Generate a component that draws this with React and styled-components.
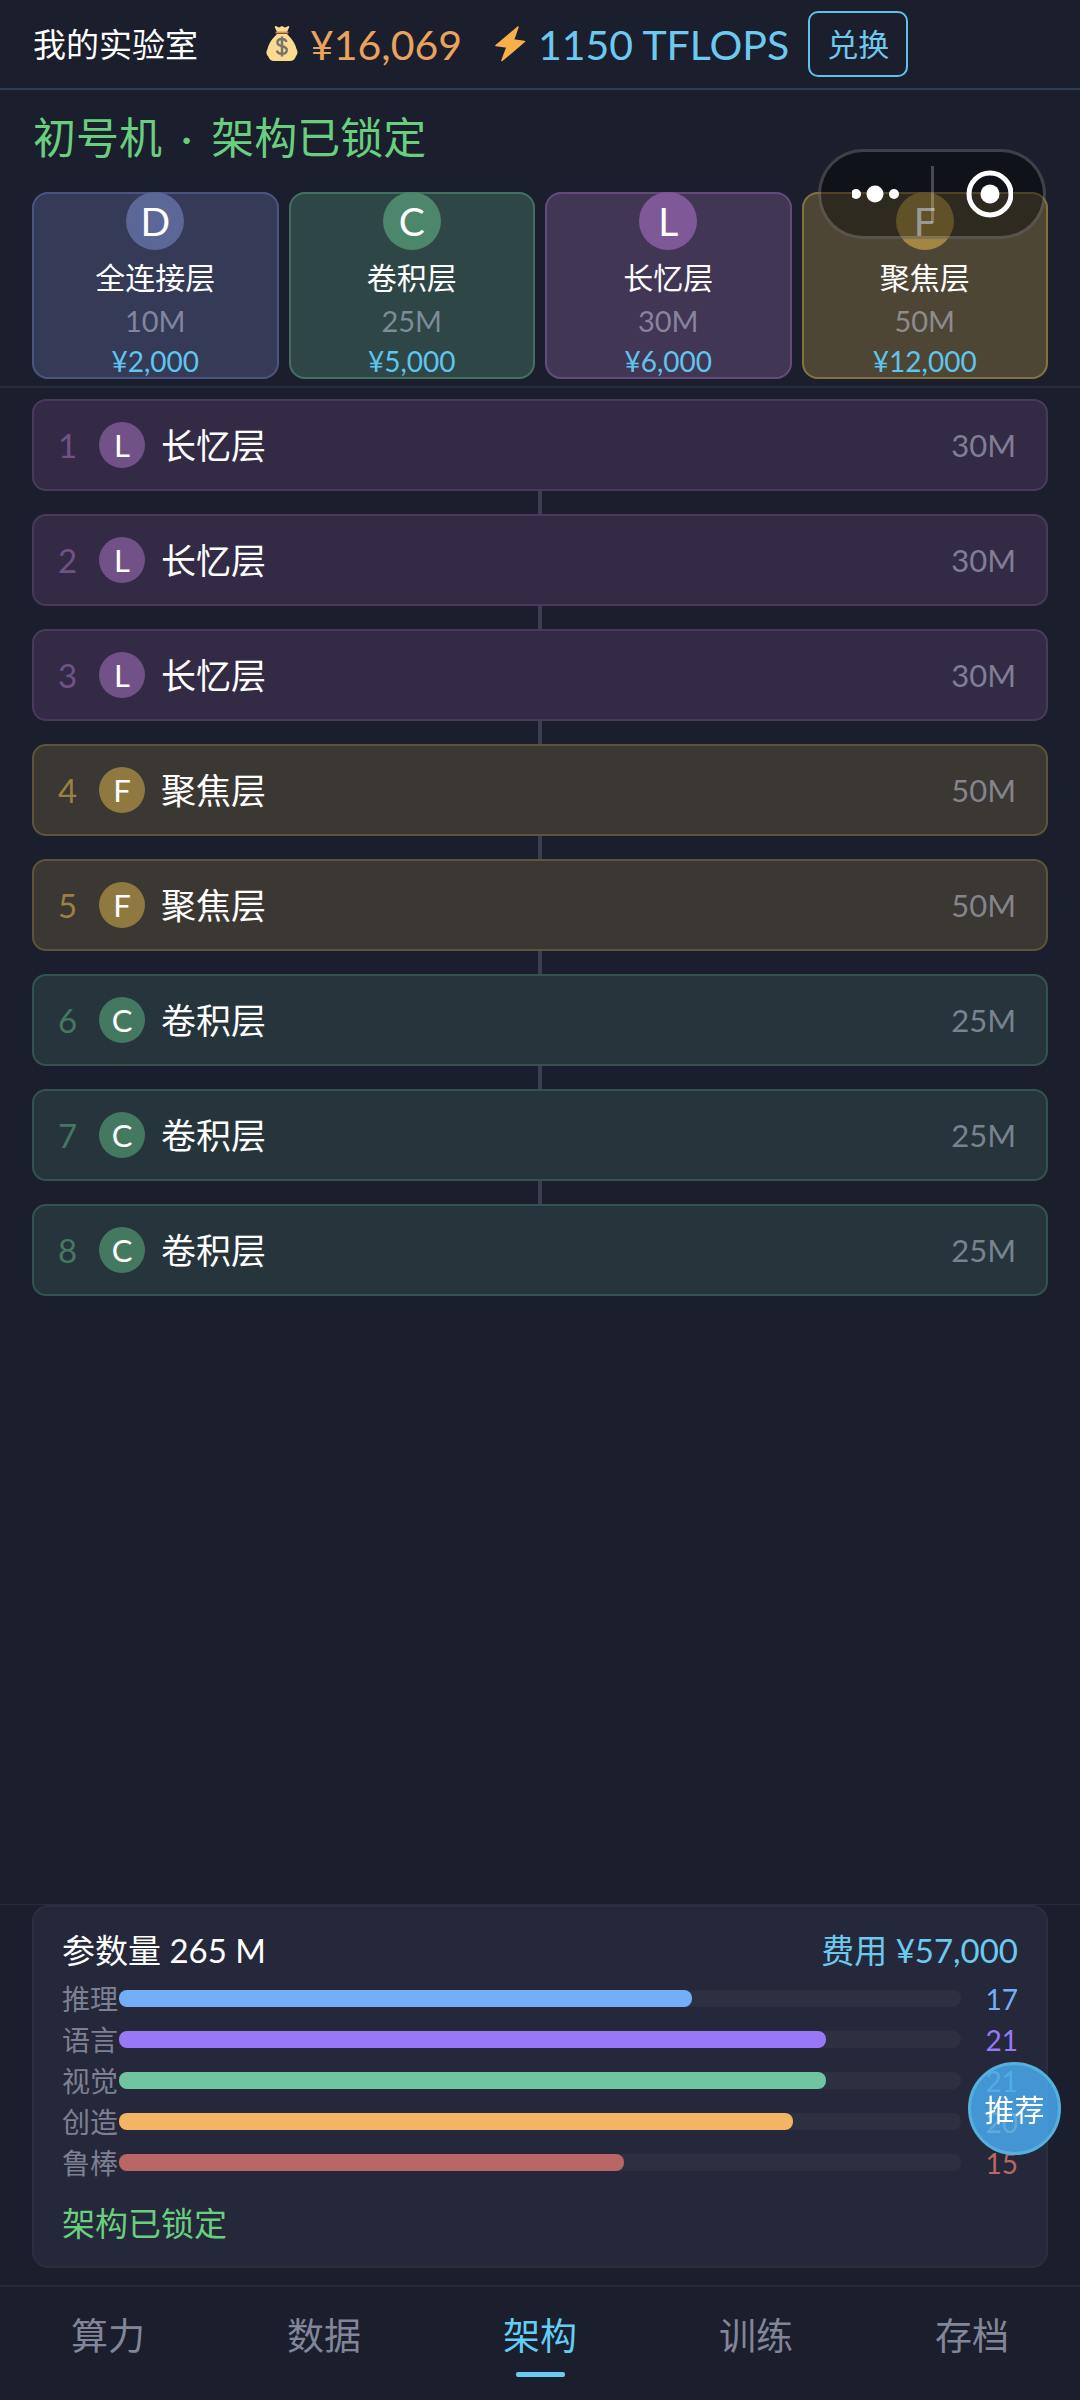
import React, { useState } from "react";
import styled, { createGlobalStyle } from "styled-components";

const GlobalStyle = createGlobalStyle`
  * {
    box-sizing: border-box;
  }
  body {
    margin: 0;
    background: #1b1e2c;
  }
  button {
    margin: 0;
    padding: 0;
    border: 0;
    background: none;
    color: inherit;
    font: inherit;
    cursor: pointer;
  }
`;

const Page = styled.div`
  min-height: 100vh;
  display: flex;
  flex-direction: column;
  background: #1b1e2c;
  color: #ffffff;
  font-family: Lato, "Noto Sans CJK SC", sans-serif;
  font-size: 33px;
  font-weight: 400;
  line-height: 1;
`;

const Header = styled.header`
  height: 90px;
  padding: 0 33px;
  display: flex;
  align-items: center;
  border-bottom: 2px solid #294052;
`;

const LabName = styled.h1`
  margin: 0 68px 0 0;
  font-size: 33px;
  font-weight: inherit;
`;

const Stat = styled.div`
  margin-right: ${(props) => props.$space}px;
  display: flex;
  align-items: center;
  gap: 12px;
  font-size: 41px;
  color: ${(props) => props.$color};
`;

const ExchangeButton = styled.button`
  && {
    height: 66px;
    padding: 0 17px;
    border: 2px solid #5dc3ea;
    border-radius: 10px;
    color: #6cc9ef;
    font-size: 31px;
  }
`;

const Title = styled.h2`
  margin: 0;
  padding: 24px 33px 0;
  height: 102px;
  font-size: 43px;
  line-height: 48px;
  font-weight: inherit;
  color: #69cf7f;
`;

const TitleDot = styled.span`
  margin: 0 8px;
`;

const Palette = styled.div`
  padding: 0 32px 7px;
  display: grid;
  grid-template-columns: repeat(4, 1fr);
  gap: 10px;
  border-bottom: 2px solid #272b3b;
`;

const LayerCard = styled.button`
  && {
    height: 187px;
    display: flex;
    flex-direction: column;
    align-items: center;
    border-radius: 16px;
    background: ${(props) => props.$tone.card};
    box-shadow: inset 0 0 0 2px ${(props) => props.$tone.cardEdge};
  }
`;

const Badge = styled.span`
  flex: none;
  width: ${(props) => props.$size}px;
  height: ${(props) => props.$size}px;
  display: flex;
  align-items: center;
  justify-content: center;
  border-radius: 50%;
  background: ${(props) => props.$color};
  color: #ffffff;
  font-size: ${(props) => (props.$size > 50 ? 39 : 31)}px;
`;

const CardName = styled.span`
  margin-top: 7px;
  font-size: 30px;
  line-height: 40px;
`;

const CardSize = styled.span`
  margin-top: 4px;
  font-size: 29px;
  line-height: 40px;
  color: rgba(205, 210, 230, 0.5);
`;

const CardPrice = styled.span`
  font-size: 28px;
  line-height: 40px;
  color: #5fc5ec;
`;

const Stack = styled.ol`
  flex: 1;
  margin: 0;
  padding: 11px 32px 0;
  list-style: none;
`;

const StackItem = styled.li`
  display: flex;
  flex-direction: column;
  align-items: center;

  &:not(:last-child)::after {
    content: "";
    width: 4px;
    height: 23px;
    background: #3b3e50;
  }
`;

const LayerRow = styled.div`
  width: 100%;
  height: 92px;
  padding: 0 30px 0 24px;
  display: flex;
  align-items: center;
  gap: 16px;
  border: 2px solid ${(props) => props.$tone.rowEdge};
  border-radius: 14px;
  background: ${(props) => props.$tone.row};
`;

const RowIndex = styled.span`
  width: 25px;
  font-size: 33px;
  color: ${(props) => props.$color};
`;

const RowName = styled.span`
  flex: 1;
  font-size: 35px;
`;

const RowSize = styled.span`
  font-size: 31px;
  color: rgba(205, 210, 230, 0.5);
`;

const Footer = styled.section`
  padding: 0 32px 17px;
  border-top: 1px solid #292c3c;
`;

const Summary = styled.div`
  height: 363px;
  padding: 19px 28px 0;
  border: 2px solid #2b2e40;
  border-radius: 16px;
  background: #25283a;
`;

const SummaryHead = styled.div`
  margin-bottom: 4px;
  display: flex;
  justify-content: space-between;
  line-height: 48px;
`;

const Cost = styled.span`
  color: #6cc9ef;
`;

const AbilityRow = styled.div`
  height: 41px;
  display: grid;
  grid-template-columns: 57px 1fr 57px;
  align-items: center;
`;

const AbilityName = styled.span`
  font-size: 28px;
  color: #7d8092;
`;

const Track = styled.div`
  height: 17px;
  border-radius: 8px;
  background: #2d3041;
`;

const Fill = styled.div`
  height: 100%;
  border-radius: 8px;
  background: ${(props) => props.$color};
`;

const AbilityValue = styled.span`
  font-size: 28px;
  text-align: right;
  color: ${(props) => props.$color};
`;

const Status = styled.p`
  margin: 16px 0 0;
  line-height: 48px;
  color: #69cf7f;
`;

const TabBar = styled.nav`
  height: 115px;
  display: grid;
  grid-template-columns: repeat(5, 1fr);
  border-top: 2px solid #272a3a;
`;

const Tab = styled.button`
  && {
    display: flex;
    flex-direction: column;
    align-items: center;
    padding-top: 24px;
    font-size: 37px;
    line-height: 50px;
    color: ${(props) => (props.$active ? "#62cdf5" : "#83869a")};
  }

  &::after {
    content: "";
    width: 49px;
    height: 5px;
    margin-top: 11px;
    border-radius: 2px;
    background: ${(props) => (props.$active ? "#6cc9ef" : "transparent")};
  }
`;

const Capsule = styled.div`
  position: fixed;
  top: 149px;
  right: 34px;
  width: 228px;
  height: 90px;
  display: flex;
  align-items: center;
  border: 3px solid rgba(255, 255, 255, 0.2);
  border-radius: 45px;
  background: rgba(0, 0, 0, 0.4);
`;

const CapsuleButton = styled.button`
  && {
    flex: 1;
    height: 100%;
    display: flex;
    align-items: center;
    justify-content: center;
  }
`;

const CapsuleDivider = styled.span`
  width: 3px;
  height: 57px;
  background: rgba(255, 255, 255, 0.24);
`;

const RecommendButton = styled.button`
  && {
    position: fixed;
    right: 19px;
    bottom: 245px;
    width: 93px;
    height: 93px;
    border: 3px solid #55b0dc;
    border-radius: 50%;
    background: rgba(73, 168, 239, 0.85);
    font-size: 30px;
  }
`;

const tones = {
  D: {
    solid: "#5a6797",
    card: "#353b57",
    cardEdge: "#4a5480",
  },
  C: {
    solid: "#4d876b",
    card: "#2e4646",
    cardEdge: "#436f60",
    row: "#26353b",
    rowEdge: "#33534f",
    badge: "#457860",
    index: "#457860",
  },
  L: {
    solid: "#7f5997",
    card: "#423655",
    cardEdge: "#654a7c",
    row: "#332b45",
    rowEdge: "#493a5b",
    badge: "#725188",
    index: "#725188",
  },
  F: {
    solid: "#a18743",
    card: "#4e4635",
    cardEdge: "#83713f",
    row: "#3b3733",
    rowEdge: "#5e5439",
    badge: "#8f7941",
    index: "#9a8142",
  },
};

const layerTypes = [
  { code: "D", name: "全连接层", size: "10M", price: "¥2,000" },
  { code: "C", name: "卷积层", size: "25M", price: "¥5,000" },
  { code: "L", name: "长忆层", size: "30M", price: "¥6,000" },
  { code: "F", name: "聚焦层", size: "50M", price: "¥12,000" },
];

const layers = ["L", "L", "L", "F", "F", "C", "C", "C"].map((code) =>
  layerTypes.find((type) => type.code === code)
);

const MAX_ABILITY = 25;

const abilities = [
  { name: "推理", value: 17, color: "#75aef8" },
  { name: "语言", value: 21, color: "#9878f6" },
  { name: "视觉", value: 21, color: "#70c5a0" },
  { name: "创造", value: 20, color: "#f2b563" },
  { name: "鲁棒", value: 15, color: "#b96764" },
];

const tabs = ["算力", "数据", "架构", "训练", "存档"];

const MoneyBag = () => (
  <svg width="32" height="38" viewBox="0 0 32 38" aria-hidden="true">
    <path
      d="M10 1l3 1.500 3-1.500 3 1.500 3.500-1.500c.8 0 .9.800.6 1.500L21 7H11L8.900 2.500C8.600 1.600 9 1 10 1z"
      fill="#fbdb92"
    />
    <path
      d="M11 9h10c3 3 8 8 9.500 15 1.800 3 .9 5.500-.5 7-.8 3-3 5-6 5H8c-3 0-5-2-6-5-1.500-1.500-2.300-4-.5-7C3 17 8 12 11 9z"
      fill="#fbdb92"
    />
    <path d="M10.500 7.500h11" stroke="#d58d50" strokeWidth="2" strokeLinecap="round" />
    <path
      d="M20.500 17c-.6-2-2.300-3-4.600-3-2.700 0-4.500 1.400-4.500 3.500 0 5 9.400 2.500 9.400 7.500 0 2.300-2 3.800-4.900 3.800-2.700 0-4.500-1.200-5-3.400M16 11.500v20"
      fill="none"
      stroke="#77736b"
      strokeWidth="2.400"
    />
  </svg>
);

const Bolt = () => (
  <svg width="32" height="38" viewBox="0 0 32 38" aria-hidden="true">
    <path
      d="M24 2L2 20.500l11 1.500L8 35.500l22.500-19L19.500 15z"
      fill="#f7b04a"
      stroke="#f7b04a"
      strokeWidth="1.500"
      strokeLinejoin="round"
    />
  </svg>
);

const App = () => {
  const [activeTab, setActiveTab] = useState("架构");

  return (
    <Page>
      <GlobalStyle />
      <Header>
        <LabName>我的实验室</LabName>
        <Stat $color="#e9a35c" $space={32}>
          <MoneyBag />
          <span>¥16,069</span>
        </Stat>
        <Stat $color="#6cc9ef" $space={19}>
          <Bolt />
          <span>1150 TFLOPS</span>
        </Stat>
        <ExchangeButton type="button">兑换</ExchangeButton>
      </Header>

      <Title>
        初号机 <TitleDot>·</TitleDot> 架构已锁定
      </Title>

      <Palette>
        {layerTypes.map(({ code, name, size, price }) => (
          <LayerCard type="button" key={code} $tone={tones[code]}>
            <Badge $size={58} $color={tones[code].solid}>
              {code}
            </Badge>
            <CardName>{name}</CardName>
            <CardSize>{size}</CardSize>
            <CardPrice>{price}</CardPrice>
          </LayerCard>
        ))}
      </Palette>

      <Stack>
        {layers.map(({ code, name, size }, i) => (
          <StackItem key={i}>
            <LayerRow $tone={tones[code]}>
              <RowIndex $color={tones[code].index}>{i + 1}</RowIndex>
              <Badge $size={46} $color={tones[code].badge}>
                {code}
              </Badge>
              <RowName>{name}</RowName>
              <RowSize>{size}</RowSize>
            </LayerRow>
          </StackItem>
        ))}
      </Stack>

      <Footer>
        <Summary>
          <SummaryHead>
            <span>参数量 265 M</span>
            <Cost>费用 ¥57,000</Cost>
          </SummaryHead>
          {abilities.map(({ name, value, color }) => (
            <AbilityRow key={name}>
              <AbilityName>{name}</AbilityName>
              <Track>
                <Fill
                  $color={color}
                  style={{ width: `${(value / MAX_ABILITY) * 100}%` }}
                />
              </Track>
              <AbilityValue $color={color}>{value}</AbilityValue>
            </AbilityRow>
          ))}
          <Status>架构已锁定</Status>
        </Summary>
      </Footer>

      <TabBar>
        {tabs.map((tab) => (
          <Tab
            type="button"
            key={tab}
            $active={tab === activeTab}
            onClick={() => setActiveTab(tab)}
          >
            {tab}
          </Tab>
        ))}
      </TabBar>

      <Capsule>
        <CapsuleButton type="button" aria-label="更多">
          <svg width="48" height="18" viewBox="0 0 48 18" fill="#ffffff">
            <circle cx="4" cy="9" r="5" />
            <circle cx="23" cy="9" r="8.500" />
            <circle cx="42" cy="9" r="5" />
          </svg>
        </CapsuleButton>
        <CapsuleDivider />
        <CapsuleButton type="button" aria-label="关闭">
          <svg width="50" height="48" viewBox="0 0 50 48">
            <circle cx="27" cy="24" r="21" fill="none" stroke="#ffffff" strokeWidth="5" />
            <circle cx="27" cy="24" r="9.500" fill="#ffffff" />
          </svg>
        </CapsuleButton>
      </Capsule>

      <RecommendButton type="button">推荐</RecommendButton>
    </Page>
  );
};

export default App;
